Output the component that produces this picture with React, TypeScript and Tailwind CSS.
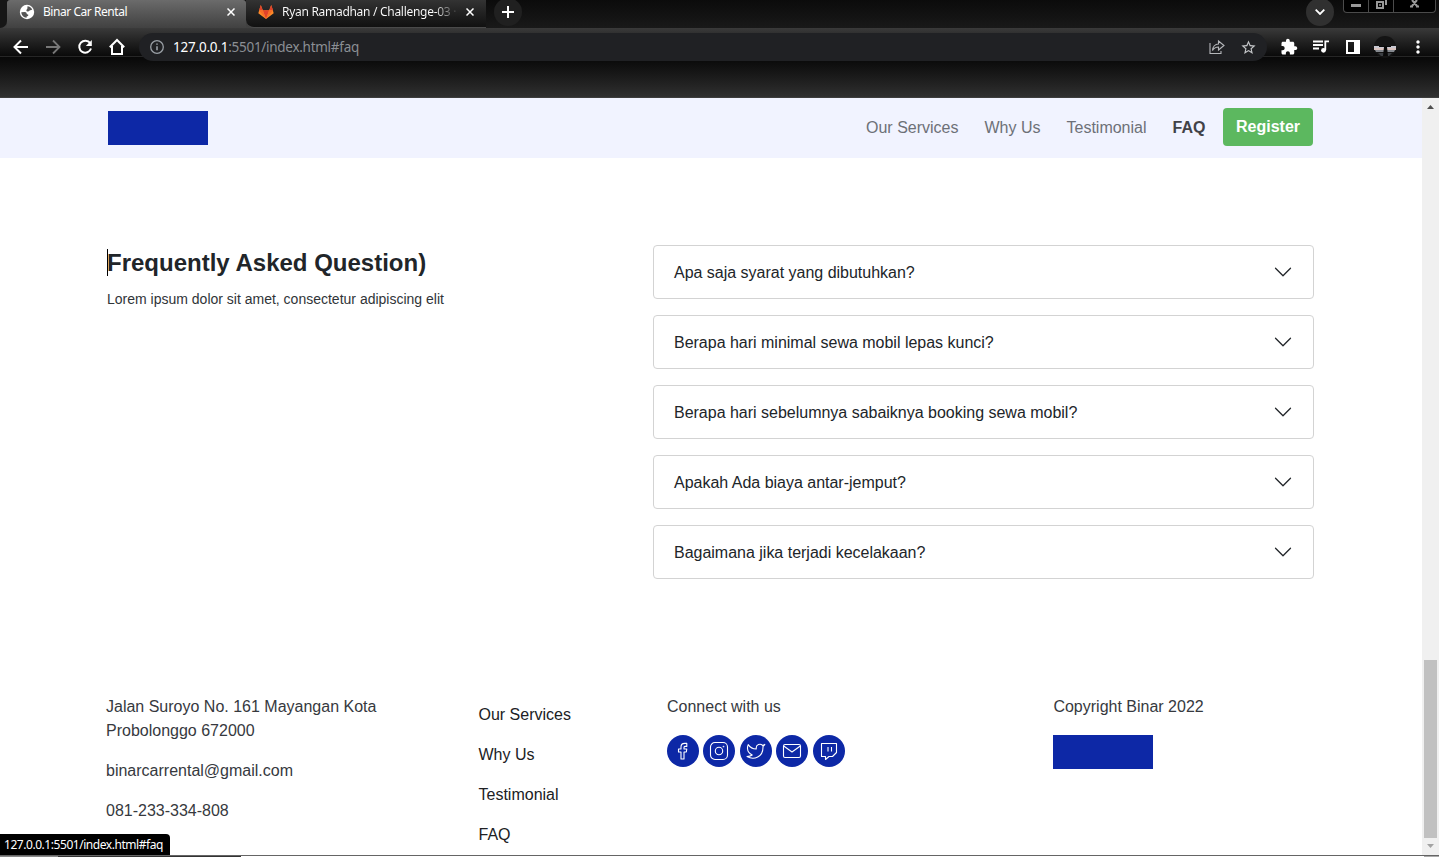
import type { ReactNode } from "react";

const questions = [
  "Apa saja syarat yang dibutuhkan?",
  "Berapa hari minimal sewa mobil lepas kunci?",
  "Berapa hari sebelumnya sabaiknya booking sewa mobil?",
  "Apakah Ada biaya antar-jemput?",
  "Bagaimana jika terjadi kecelakaan?",
];
const links = ["Our Services", "Why Us", "Testimonial", "FAQ"];

function Mat({ d, size = 18, className = "" }: { d: string; size?: number; className?: string }) {
  return (
    <svg width={size} height={size} viewBox="0 0 24 24" fill="currentColor" className={`shrink-0 ${className}`}>
      <path d={d} />
    </svg>
  );
}

function Close() {
  return (
    <svg width="8" height="8" viewBox="0 0 8 8" className="shrink-0 text-white" stroke="currentColor" strokeWidth="1.5">
      <path d="M.5.5l7 7M7.5.5l-7 7" />
    </svg>
  );
}

function Tabs() {
  return (
    <div className="flex h-7 bg-gradient-to-b from-[#0b0b0b] to-[#191919]">
      <div className="w-[7px] bg-[#414141]"><div className="h-7 rounded-br-lg bg-[#161616]" /></div>
      <div className="flex h-7 w-[239px] items-center rounded-t-[3px] bg-gradient-to-b from-[#6b6b6b] to-[#414141] pb-1 pl-3 pr-[11px]">
        <svg width="16" height="16" viewBox="0 0 16 16" className="shrink-0">
          <circle cx="8" cy="8" r="7.2" fill="#fff" />
          <path d="M8.500 2.300c2 .1 3.900 1.500 4.700 3.300-.7.500-1.500.9-2.400.7-.3.900-1.200 1.300-2.200 1.100C7.300 7.200 6.900 6 7.900 5.200c.8-.5.400-1.600.6-2.900zM2.300 8.300l3.500-.2c1.500.2 2.100 1 1.900 2l1.600.6c.2 1-.6 1.500-1.500 1.600l-.3 1.500C4.700 13.500 2.400 11.200 2.300 8.300z" fill="#555" />
        </svg>
        <span className="ml-2 flex-1 whitespace-nowrap text-[12px] leading-4 tracking-[-0.45px] text-white">Binar Car Rental</span>
        <Close />
      </div>
      <div className="w-[240px] bg-[#414141]">
        <div className="flex h-7 items-center rounded-bl-lg border-b border-[#4a4a4a] bg-gradient-to-b from-[#333] to-[#111] pb-[3px] pl-3 pr-3">
          <svg width="16" height="16" viewBox="0 0 16 16" className="shrink-0">
            <path d="M8 15L.3 9.2 2.8 1l2 5.2h6.4l2-5.2 2.500 8.200z" fill="#fc8a28" />
            <path d="M8 15L4.800 6.200h6.400z" fill="#e2432a" />
            <path d="M2.800 1L1 6.200h3.800zM13.200 1l2 5.200h-4z" fill="#df432b" />
            <path d="M8 15L1 6.200h3.800zM8 15l7-8.800h-3.800z" fill="#f76d28" />
          </svg>
          <span className="ml-2 w-[175px] whitespace-nowrap bg-gradient-to-r from-white from-[87%] to-[#444] to-[99%] bg-clip-text text-[12px] leading-4 tracking-[-0.29px] text-transparent">
            Ryan Ramadhan / Challenge-03 ·
          </span>
          <span className="ml-auto flex"><Close /></span>
        </div>
      </div>
      <div className="-mt-[2px] ml-2 flex h-7 w-7 items-center justify-center rounded-full bg-[#202020]">
        <svg width="12" height="12" viewBox="0 0 12 12" stroke="white" strokeWidth="2"><path d="M6 0v12M0 6h12" /></svg>
      </div>
      <div className="-mt-[2px] ml-auto mr-[9px] flex h-7 w-7 items-center justify-center rounded-full bg-[#303030]">
        <svg width="10" height="6" viewBox="0 0 10 6" fill="none" stroke="white" strokeWidth="1.8"><path d="M.7.7L5 5 9.300.7" /></svg>
      </div>
      <div className="mr-[3px] flex h-[13px] w-[93px] rounded-b border border-t-0 border-[#4b4b4b] bg-black">
        <div className="flex w-[25px] justify-center border-r border-[#4b4b4b]"><span className="mt-1 h-[3px] w-[10px] bg-[#999]" /></div>
        <div className="flex w-[25px] justify-center border-r border-[#4b4b4b]">
          <svg width="11" height="9" viewBox="0 0 11 9" fill="none" stroke="#999" strokeWidth="2"><path d="M1 2h6v6H1zM10 0v5" /><path d="M3 5h2" strokeWidth="1.500" /></svg>
        </div>
        <div className="flex flex-1 justify-center">
          <svg width="9" height="8" viewBox="0 0 9 8" stroke="#999" strokeWidth="2"><path d="M2 0l5 6M7 0L2 6M0 6.500h3M6 6.500h3" /></svg>
        </div>
      </div>
    </div>
  );
}

function Toolbar() {
  return (
    <div className="relative flex h-[70px] flex-col">
      <div className="h-[29px] shrink-0 border-b border-[#262626] bg-gradient-to-b from-[#3a3a3a] to-[#0a0a0a]" />
      <div className="h-[41px] shrink-0 border-b border-[#3d3d3d] bg-gradient-to-b from-[#080808] to-[#303030]" />
      <div className="absolute inset-x-0 top-[5px] flex h-7 items-center text-white">
        <div className="ml-3 flex w-[127px] items-center gap-[14px]">
          <svg width="18" height="18" viewBox="0 0 18 18" fill="none" stroke="currentColor" strokeWidth="2"><path d="M16 9H3M9 2.500L2.500 9 9 15.500" /></svg>
          <svg width="18" height="18" viewBox="0 0 18 18" fill="none" stroke="#777" strokeWidth="1.8"><path d="M2 9h13M9 2.500L15.500 9 9 15.500" /></svg>
          <svg width="18" height="18" viewBox="0 0 18 18" fill="none" stroke="currentColor" strokeWidth="2"><path d="M14.200 5.200A6 6 0 1015 10.500" /><path d="M15.800 2v6H9.800z" fill="currentColor" stroke="none" /></svg>
          <svg width="18" height="18" viewBox="0 0 18 18" fill="none" stroke="currentColor" strokeWidth="2"><path d="M1.800 9.200L9 2l7.200 7.200M4 8v8h10V8" /></svg>
        </div>
        <div className="flex h-7 w-[1128px] items-center rounded-full bg-[#202124] pl-[11px] pr-[10px]">
          <svg width="14" height="14" viewBox="0 0 14 14" fill="none" stroke="#9aa0a6" strokeWidth="1.3"><circle cx="7" cy="7" r="6.3" /><path d="M7 6.200v4M7 3.500v1.300" strokeWidth="1.6" /></svg>
          <span className="ml-[9px] text-[13.5px] leading-5 tracking-[-0.22px] text-white">127.0.0.1<span className="tracking-[-0.28px] text-[#8b8f94]">:5501/index.html#faq</span></span>
          <svg width="16" height="16" viewBox="0 0 16 16" fill="none" stroke="#b5b7ba" strokeWidth="1.1" className="ml-auto"><path d="M1 4v10.500h11V12" /><path d="M9.500 5V2L15 6.500 9.500 11V8C7 8 5 9 3.500 11.500 3.800 8 6 5 9.500 5z" /></svg>
          <Mat size={17} className="ml-[15px] text-[#c4c6c8]" d="M22 9.24l-7.19-.62L12 2 9.19 8.63 2 9.24l5.46 4.73L5.82 21 12 17.27 18.18 21l-1.63-7.03L22 9.24zM12 15.4l-3.76 2.27 1-4.28-3.32-2.88 4.38-.38L12 6.1l1.71 4.04 4.38.38-3.32 2.88 1 4.28L12 15.4z" />
        </div>
        <div className="ml-[13px] flex items-center gap-[14px]">
          <Mat d="M20.5 11H19V7c0-1.1-.9-2-2-2h-4V3.5C13 2.12 11.88 1 10.5 1S8 2.12 8 3.5V5H4c-1.1 0-1.99.9-1.99 2v3.8H3.5c1.49 0 2.7 1.21 2.7 2.7s-1.21 2.7-2.7 2.7H2V20c0 1.1.9 2 2 2h3.8v-1.5c0-1.49 1.21-2.7 2.7-2.7 1.49 0 2.7 1.21 2.7 2.7V22H17c1.1 0 2-.9 2-2v-4h1.5c1.38 0 2.5-1.12 2.5-2.5S21.88 11 20.5 11z" />
          <svg width="18" height="14" viewBox="-1 0 18 14" className="shrink-0"><path d="M0 1.500h10M0 5h10M0 8.500h6" stroke="white" strokeWidth="1.8" /><circle cx="10.500" cy="10.300" r="2.4" fill="white" /><path d="M12.300 10V1.400H16" stroke="white" strokeWidth="1.8" fill="none" /></svg>
          <svg width="18" height="14" viewBox="0 0 18 14" className="shrink-0"><path d="M2 0h14v14H2zM4 2v10h6V2z" fill="white" fillRule="evenodd" /></svg>
          <svg width="22" height="22" viewBox="0 0 22 22" className="-ml-[2px] shrink-0">
            <circle cx="11" cy="11" r="11" fill="#141414" />
            <path d="M0 10h22v2H0z" fill="#c9c8d2" />
            <path d="M0 12h22v2H0z" fill="#d8c2be" />
            <path d="M1 14h20l-1 2H2z" fill="#85898f" />
            <path d="M4 17h14l-3 3H7z" fill="#3b3e42" />
            <path d="M5 10h12v1H5zM10 11h3l1 9H9z" fill="#090909" />
          </svg>
          <Mat size={20} className="-ml-[2px]" d="M12 8c1.1 0 2-.9 2-2s-.9-2-2-2-2 .9-2 2 .9 2 2 2zm0 2c-1.1 0-2 .9-2 2s.9 2 2 2 2-.9 2-2-.9-2-2-2zm0 6c-1.1 0-2 .9-2 2s.9 2 2 2 2-.9 2-2-.9-2-2-2z" />
        </div>
      </div>
    </div>
  );
}

function Social({ children }: { children: ReactNode }) {
  return (
    <div className="flex h-8 w-8 items-center justify-center rounded-full bg-[#0d28a6]">
      <svg width="20" height="20" viewBox="0 0 20 20" fill="none" stroke="white" strokeWidth="1.1" strokeLinejoin="round">{children}</svg>
    </div>
  );
}

export default function App() {
  return (
    <div className="relative flex h-[857px] w-[1439px] flex-col overflow-hidden bg-white">
      <div className="h-[98px] shrink-0 font-['Noto_Sans',sans-serif]"><Tabs /><Toolbar /></div>
      <div className="flex h-[757px] shrink-0">
        <div className="flex w-[1422px] flex-col overflow-hidden font-['Liberation_Sans',sans-serif] text-base text-[#212529]">
          <header className="flex h-[60px] shrink-0 items-center bg-[#f1f3ff] pl-[108px] pr-[109px]">
            <div className="h-[34px] w-[100px] bg-[#0d28a6]" />
            <nav className="ml-auto flex gap-[26px] pr-[17.6px] text-[#6d7077]">
              {links.map((link) => <span key={link} className={link === "FAQ" ? "font-bold text-[#414248]" : ""}>{link}</span>)}
            </nav>
            <button className="mb-[2px] h-[38px] w-[90px] rounded bg-[#5cb85f] font-bold text-white">Register</button>
          </header>
          <main className="mt-[87px] flex h-[334px] shrink-0 pl-[107px]">
            <div className="w-[546px]">
              <div className="mt-[4px] flex">
                <span className="-mr-px h-[27px] w-px shrink-0 bg-black" />
                <h1 className="text-[24px] font-bold leading-[28px]">Frequently Asked Question)</h1>
              </div>
              <p className="mt-[12px] text-[14px] leading-[21px] text-[#303438]">Lorem ipsum dolor sit amet, consectetur adipiscing elit</p>
            </div>
            <div className="flex w-[661px] flex-col gap-4">
              {questions.map((question) => (
                <div key={question} className="flex h-[54px] items-center justify-between rounded border border-[#d3d3d3] pl-5 pr-5">
                  <span className="pt-[2px] tracking-[-0.01px]">{question}</span>
                  <svg width="20" height="20" viewBox="0 0 16 16" fill="none" stroke="#212529" strokeLinecap="round" strokeLinejoin="round"><path d="M2 5l6 6 6-6" /></svg>
                </div>
              ))}
            </div>
          </main>
          <footer className="mt-[116px] flex shrink-0 pl-[106px] leading-6 text-[#36393e]">
            <div className="flex w-[372.5px] flex-col gap-4">
              <p>Jalan Suroyo No. 161 Mayangan Kota<br />Probolonggo 672000</p><p>binarcarrental@gmail.com</p><p>081-233-334-808</p>
            </div>
            <div className="mt-2 flex w-[188.5px] flex-col gap-4 text-[#202124]">{links.map((link) => <span key={link}>{link}</span>)}</div>
            <div className="w-[386.4px]">
              <p>Connect with us</p>
              <div className="mt-[16px] flex gap-[4.4px]">
                <Social><path d="M8 18v-7H5.500V8H8V6c0-2.400 1.400-3.600 3.600-3.600h2.200v3H12c-.8 0-1 .4-1 1.200V8h2.800l-.5 3H11v7z" /></Social>
                <Social><rect x="1.500" y="1.500" width="17" height="17" rx="4.500" /><circle cx="10" cy="10" r="3.700" /><circle cx="14.500" cy="5.500" r=".3" fill="white" /></Social>
                <Social><path d="M18.800 3.400c-.7.500-1.500.8-2.300 1-2.200-2.400-6.500-.9-6.300 2.800v.8C7 8 4.100 6.500 2.200 3.600c0 0-3.200 7.200 4 10.400-1.500 1.100-3.400 1.600-5.200 1.600 7.200 4 16 0 16-9.200 0-.3 0-.5-.1-.8.9-.8 1.500-1.400 1.900-2.200z" /></Social>
                <Social><rect x="1.500" y="3.500" width="17" height="13" rx="1.500" /><path d="M1.700 5l8.300 6 8.300-6" /></Social>
                <Social><path d="M2.500 2.500h15v9l-4 4H10L6.500 18.500v-3h-4z" /><path d="M9 6v4.500M12.500 6v4.500" /></Social>
              </div>
            </div>
            <div><p>Copyright Binar 2022</p><div className="mt-4 h-[34px] w-[100px] bg-[#0d28a6]" /></div>
          </footer>
        </div>
        <div className="flex w-[17px] flex-col items-center bg-[#f0f0f0]">
          <svg width="7" height="4" viewBox="0 0 7 4" className="mt-[7px]"><path d="M3.500 0L7 4H0z" fill="#505050" /></svg>
          <div className="mt-[551px] h-[178px] w-[13px] bg-[#c1c1c1]" />
          <svg width="7" height="4" viewBox="0 0 7 4" className="mt-[6px]"><path d="M0 0h7L3.500 4z" fill="#a3a3a3" /></svg>
        </div>
      </div>
      <div className="h-px shrink-0 bg-[#656565]" />
      <div className="flex h-px shrink-0 bg-white">
        <span className="w-[58px] bg-[#888]" /><span className="w-[183px] bg-[#333]" />
        <span className="ml-auto w-[15px] bg-[#aaa]" />
      </div>
      <div className="absolute bottom-[2px] left-0 h-[21px] w-[170px] rounded-tr bg-black pl-1 font-['Noto_Sans',sans-serif] text-[12px] leading-[21px] tracking-[-0.45px] text-white">127.0.0.1:5501/index.html#faq</div>
    </div>
  );
}
